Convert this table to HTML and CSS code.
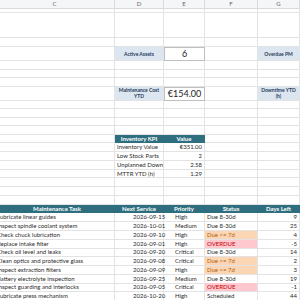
FILE: index.html
```html
<!DOCTYPE html>
<html>
<head>
<meta charset="utf-8">
<link rel="stylesheet" href="styles.css">
</head>
<body>
<div class="sheet">
  <div class="row hdr"><div class="c first">C</div><div class="c">D</div><div class="c">E</div><div class="c">F</div><div class="c">G</div></div>
  <div class="row h4"><div class="c"></div><div class="c"></div><div class="c"></div><div class="c"></div><div class="c"></div></div>
  <div class="row h25"><div class="c"></div><div class="c"></div><div class="c"></div><div class="c"></div><div class="c"></div></div>
  <div class="row h9"><div class="c"></div><div class="c"></div><div class="c"></div><div class="c"></div><div class="c"></div></div>
  <div class="row h14"><div class="c"></div><div class="c lbl">Active Assets</div><div class="c val">6</div><div class="c"></div><div class="c lbl">Overdue PM</div></div>
  <div class="row h85"><div class="c"></div><div class="c"></div><div class="c"></div><div class="c"></div><div class="c"></div></div>
  <div class="row h85"><div class="c"></div><div class="c"></div><div class="c"></div><div class="c"></div><div class="c"></div></div>
  <div class="row h85"><div class="c"></div><div class="c"></div><div class="c"></div><div class="c"></div><div class="c"></div></div>
  <div class="row h14"><div class="c"></div><div class="c lbl">Maintenance Cost<br>YTD</div><div class="c val">€154.00</div><div class="c"></div><div class="c lbl">Downtime YTD<br>(h)</div></div>
  <div class="row h85"><div class="c"></div><div class="c"></div><div class="c"></div><div class="c"></div><div class="c"></div></div>
  <div class="row h85"><div class="c"></div><div class="c"></div><div class="c"></div><div class="c"></div><div class="c"></div></div>
  <div class="row h85"><div class="c"></div><div class="c"></div><div class="c"></div><div class="c"></div><div class="c"></div></div>
  <div class="row h85"><div class="c"></div><div class="c"></div><div class="c"></div><div class="c"></div><div class="c"></div></div>
  <div class="row"><div class="c"></div><div class="c th">Inventory KPI</div><div class="c th">Value</div><div class="c"></div><div class="c"></div></div>
  <div class="row"><div class="c"></div><div class="c tl">Inventory Value</div><div class="c tr">€351.00</div><div class="c"></div><div class="c"></div></div>
  <div class="row"><div class="c"></div><div class="c tl">Low Stock Parts</div><div class="c tr">2</div><div class="c"></div><div class="c"></div></div>
  <div class="row"><div class="c"></div><div class="c tl">Unplanned Downtime</div><div class="c tr">2.58</div><div class="c"></div><div class="c"></div></div>
  <div class="row"><div class="c"></div><div class="c tl">MTTR YTD (h)</div><div class="c tr">1.29</div><div class="c"></div><div class="c"></div></div>
  <div class="row"><div class="c"></div><div class="c"></div><div class="c"></div><div class="c"></div><div class="c"></div></div>
  <div class="row"><div class="c"></div><div class="c"></div><div class="c"></div><div class="c"></div><div class="c"></div></div>
  <div class="row"><div class="c"></div><div class="c"></div><div class="c"></div><div class="c"></div><div class="c"></div></div>
  <div class="row"><div class="c th">Maintenance Task</div><div class="c th">Next Service</div><div class="c th">Priority</div><div class="c th">Status</div><div class="c th">Days Left</div></div>
  <div class="row"><div class="c task">Lubricate linear guides</div><div class="c dt">2026-09-15</div><div class="c pr">High</div><div class="c tl">Due 8-30d</div><div class="c tr">9</div></div>
  <div class="row"><div class="c task">Inspect spindle coolant system</div><div class="c dt">2026-10-01</div><div class="c pr">Medium</div><div class="c tl">Due 8-30d</div><div class="c tr">25</div></div>
  <div class="row"><div class="c task">Check chuck lubrication</div><div class="c dt">2026-09-10</div><div class="c pr">High</div><div class="c tl soon">Due &lt;= 7d</div><div class="c tr">4</div></div>
  <div class="row"><div class="c task">Replace intake filter</div><div class="c dt">2026-09-01</div><div class="c pr">High</div><div class="c tl over">OVERDUE</div><div class="c tr">-5</div></div>
  <div class="row"><div class="c task">Check oil level and leaks</div><div class="c dt">2026-09-20</div><div class="c pr">Critical</div><div class="c tl">Due 8-30d</div><div class="c tr">14</div></div>
  <div class="row"><div class="c task">Clean optics and protective glass</div><div class="c dt">2026-09-08</div><div class="c pr">Critical</div><div class="c tl soon">Due &lt;= 7d</div><div class="c tr">2</div></div>
  <div class="row"><div class="c task">Inspect extraction filters</div><div class="c dt">2026-09-09</div><div class="c pr">High</div><div class="c tl soon">Due &lt;= 7d</div><div class="c tr">3</div></div>
  <div class="row"><div class="c task">Battery electrolyte inspection</div><div class="c dt">2026-09-25</div><div class="c pr">Medium</div><div class="c tl">Due 8-30d</div><div class="c tr">19</div></div>
  <div class="row"><div class="c task">Inspect guarding and interlocks</div><div class="c dt">2026-09-05</div><div class="c pr">Critical</div><div class="c tl over">OVERDUE</div><div class="c tr">-1</div></div>
  <div class="row"><div class="c task">Lubricate press mechanism</div><div class="c dt">2026-10-20</div><div class="c pr">High</div><div class="c tl">Scheduled</div><div class="c tr">44</div></div>
</div>
</body>
</html>
```
FILE: styles.css
```css
html, body {
  margin: 0;
  padding: 0;
  background: #ffffff;
  overflow: hidden;
}
.sheet {
  width: 300px;
  font-family: Lato, "Liberation Sans", sans-serif;
  font-size: 6px;
  color: #2b2b2b;
}
.row {
  display: grid;
  grid-template-columns: 115px 49px 41px 53px 42px;
  height: 8.75px;
}
.row.hdr { height: 9px; background: #f5f6f7; color: #666666; }
.row.h4 { height: 4px; }
.row.h25 { height: 25px; }
.row.h9 { height: 9px; }
.row.h14 { height: 14px; }
.row.h85 { height: 8.5px; }
.c {
  border-right: 1px solid #e3e3e3;
  border-bottom: 1px solid #e3e3e3;
  box-sizing: border-box;
  overflow: hidden;
  white-space: nowrap;
  line-height: 8px;
}
.hdr .c {
  text-align: center;
  font-size: 6px;
  line-height: 8.5px;
  border-color: #dadada;
}
.hdr .first { padding-right: 5px; }
.lbl {
  background: #dce6f1;
  color: #1f3a56;
  font-weight: bold;
  font-size: 5px;
  line-height: 6px;
  text-align: center;
  display: flex;
  align-items: center;
  justify-content: center;
  white-space: normal;
}
.val {
  border: 1px solid #bfbfbf;
  font-size: 9px;
  line-height: 12px;
  display: flex;
  align-items: center;
  justify-content: center;
  color: #222222;
}
.th {
  background: #2e6e7e;
  color: #ffffff;
  font-weight: bold;
  text-align: center;
  border-color: #2e6e7e;
}
.tl { text-align: left; padding-left: 2px; }
.task { text-align: left; text-indent: -3px; }
.tr { text-align: right; padding-right: 2px; }
.dt { padding-left: 18px; overflow: visible; }
.pr { padding-left: 11px; }
.soon { background: #fcd5b4; color: #b45f06; }
.over { background: #ffc7ce; color: #c00000; }
```
